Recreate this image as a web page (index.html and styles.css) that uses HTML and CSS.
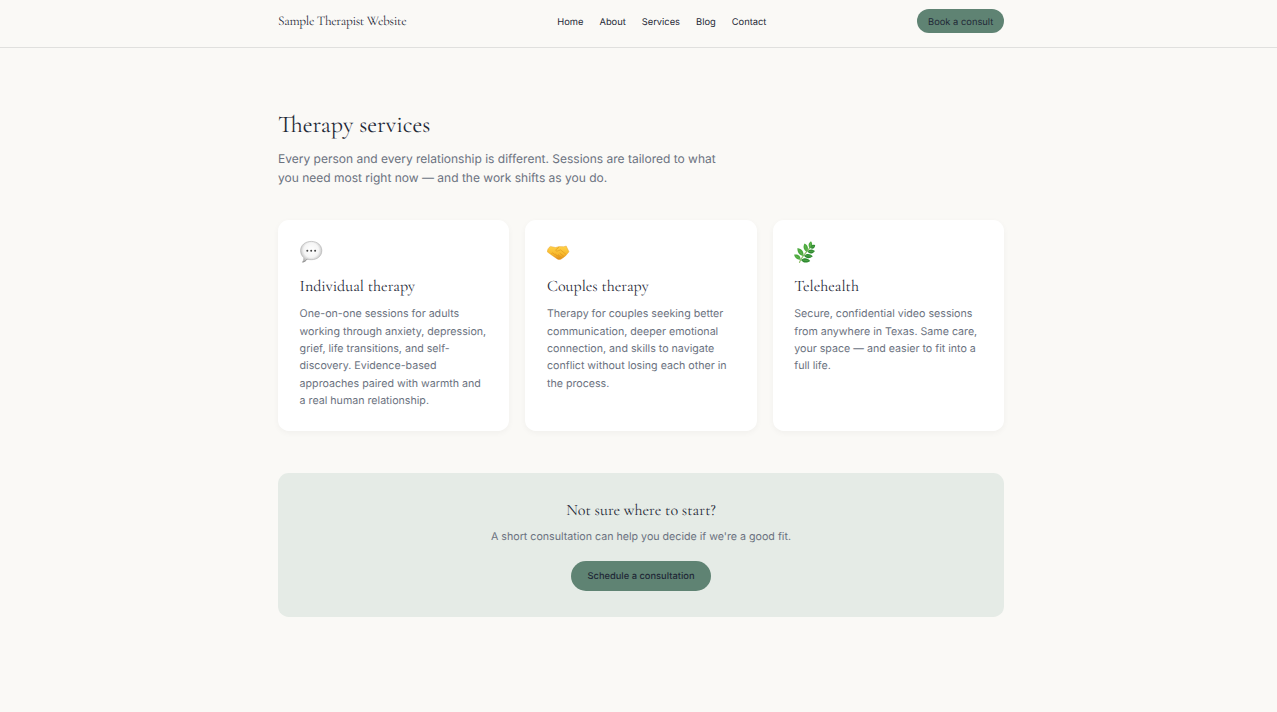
FILE: index.html
```html
<!DOCTYPE html>
<html lang="en">
<head>
    <meta charset="UTF-8">
    <meta name="viewport" content="width=device-width, initial-scale=1.0">
    <title>Services | Sample Therapist Website</title>
    <link rel="stylesheet" href="styles.css">
</head>
<body>
    <header class="site-header">
        <div class="container nav">
            <a href="#" class="brand">Sample Therapist Website</a>
            <nav class="nav-links">
                <a href="#">Home</a>
                <a href="#">About</a>
                <a href="#">Services</a>
                <a href="#">Blog</a>
                <a href="#">Contact</a>
            </nav>
            <a href="#" class="btn btn-small">Book a consult</a>
        </div>
    </header>

    <main class="container">
        <section class="intro">
            <h1>Therapy services</h1>
            <p>Every person and every relationship is different. Sessions are tailored to what you need most right now — and the work shifts as you do.</p>
        </section>

        <section class="cards">
            <article class="card">
                <!-- speech bubble -->
                <svg class="card-icon" viewBox="0 0 24 24">
                    <defs>
                        <radialGradient id="bubble" cx="50%" cy="42%" r="58%">
                            <stop offset="0" stop-color="#fff"/>
                            <stop offset="0.6" stop-color="#f5f5f5"/>
                            <stop offset="1" stop-color="#b4b4b4"/>
                        </radialGradient>
                    </defs>
                    <path d="M11.3 1.4C17.3 1.4 21.8 5.2 21.8 10.6S17.4 19.7 11.4 19.7C9.7 19.7 8.3 19.6 7 19.1C5.8 20.8 4.2 22.3 2.4 22.2C3.5 21 3.9 19.3 3.7 17.6C1.7 15.8 .6 13.4 .6 10.6C.6 5.2 5.2 1.4 11.3 1.4Z" fill="url(#bubble)" stroke="#acacac" stroke-width=".6"/>
                    <path d="M2.6 22C5 21.5 6 20.5 7 19.3" fill="none" stroke="#858585" stroke-width=".8"/>
                    <circle cx="7.3" cy="10.7" r="1" fill="#444"/>
                    <circle cx="11.2" cy="10.7" r="1" fill="#444"/>
                    <circle cx="15.1" cy="10.7" r="1" fill="#444"/>
                </svg>
                <h2>Individual therapy</h2>
                <p>One-on-one sessions for adults working through anxiety, depression, grief, life transitions, and self-discovery. Evidence-based approaches paired with warmth and a real human relationship.</p>
            </article>
            <article class="card">
                <!-- handshake -->
                <svg class="card-icon" viewBox="0 0 24 24">
                    <defs>
                        <linearGradient id="hands" x1="0" y1="0" x2="0" y2="1">
                            <stop offset="0" stop-color="#ffd248"/>
                            <stop offset="0.6" stop-color="#f8b92c"/>
                            <stop offset="1" stop-color="#df8b18"/>
                        </linearGradient>
                    </defs>
                    <path d="M3.4 6.4L8.6 7.5L12 6.6L16.8 6.7L19.2 6L22 11.8L19.5 14.7C18.2 16.5 16.4 17.7 14.2 19C12.8 19.8 11.4 19.8 10.2 18.9L3.8 14.5L.2 11.8C.2 9.8 1.4 7.6 3.4 6.4Z" fill="url(#hands)" stroke="#e39a22" stroke-width=".4"/>
                    <path d="M12 7.2L8.8 9.8C8.4 11 9.9 11.5 11.1 10.8L13.6 9.9L19.2 14.5M4.2 13.9L5.8 12.8L7.2 14.3L8.7 14L9.6 15.7L11.3 15.6L12.2 17.6L11.2 18.8M12.6 13L16.8 16.3M11 14.4L14.6 17.8" fill="none" stroke="#dc941f" stroke-width=".6"/>
                </svg>
                <h2>Couples therapy</h2>
                <p>Therapy for couples seeking better communication, deeper emotional connection, and skills to navigate conflict without losing each other in the process.</p>
            </article>
            <article class="card">
                <!-- herb sprig -->
                <svg class="card-icon" viewBox="0 0 24 24">
                    <path d="M5.4 22.8C6.4 18.4 11.6 13 16.5 6.8" fill="none" stroke="#8fbd68" stroke-width="1.1"/>
                    <g fill="#4aa83c">
                        <path d="M15.8 8.2C13.7 5.4 14.5 2.9 17 1.2C18.9 3.7 18.5 6.6 15.8 8.2Z"/>
                        <path d="M12.7 11.8C9.2 10 8.8 6.3 10.6 3.6C14 5.3 15 8.9 12.7 11.8Z"/>
                        <path d="M9.2 16C5.2 15.2 3 12 3.5 8C7.8 8.9 10.4 12 9.2 16Z"/>
                        <path d="M6.6 19.6C3.3 20.1 .8 18 .1 14.7C3.9 14 6.7 15.9 6.6 19.6Z"/>
                    </g>
                    <g fill="#2d8a2f">
                        <path d="M16.2 8C16.8 5 19 4.1 21.2 5.2C20.8 8.4 18.8 9.6 16.2 8Z"/>
                        <path d="M13.4 11.6C15 8.8 18.4 8.7 21 11C18.6 14.2 15.4 14.4 13.4 11.6Z"/>
                        <path d="M10 15.7C12.7 13 16.4 13.6 18.8 16.3C15.6 19 12.1 18.7 10 15.7Z"/>
                        <path d="M7 20C10 17.3 13.8 18 16.2 21C12.6 23.4 9.1 23 7 20Z"/>
                    </g>
                    <path d="M16.8 2.8L16 7.4M11.2 5.4L12.6 10.8M4.6 9.6L8.6 15M1.4 15.7L6 18.9M16.8 7.4L20.2 6.1M14.4 11.5L19.4 11.2M11.4 15.6L17.2 16.2M8.8 20L14.4 20.8" fill="none" stroke="#81c46a" stroke-width=".4"/>
                </svg>
                <h2>Telehealth</h2>
                <p>Secure, confidential video sessions from anywhere in Texas. Same care, your space — and easier to fit into a full life.</p>
            </article>
        </section>

        <section class="cta">
            <h2>Not sure where to start?</h2>
            <p>A short consultation can help you decide if we're a good fit.</p>
            <a href="#" class="btn">Schedule a consultation</a>
        </section>
    </main>
</body>
</html>
```
FILE: styles.css
```css
*{
    margin: 0;
    padding: 0;
    box-sizing: border-box;
}
body{
    min-height: 100vh;
    background: #faf9f6;
    color: #1f2937;
    font-family: Inter, sans-serif;
    text-rendering: geometricPrecision;
}
a{
    color: inherit;
    text-decoration: none;
}
h1, h2, .brand{
    font-family: "Cormorant Garamond", "Liberation Serif", serif;
    font-weight: 400;
}
.container{
    width: 726px;
    margin-left: 278px;
}

/* header */
.site-header{
    height: 48px;
    border-bottom: 1px solid #e0e0de;
}
.nav{
    display: flex;
    justify-content: space-between;
    align-items: center;
    height: 42px;
}
.brand{
    font-size: 13.33px;
    letter-spacing: -0.33px;
}
.nav-links{
    display: flex;
    gap: 16px;
    font-size: 9.33px;
    padding-top: 2px;
}
.btn{
    display: inline-block;
    height: 30px;
    padding: 0 16.5px;
    border-radius: 15px;
    background: #5f8373;
    font-size: 9.33px;
    font-weight: 500;
    line-height: 31px;
}
.btn-small{
    height: 24px;
    padding: 0 10.7px;
    font-weight: 400;
    line-height: 27px;
}

/* intro */
.intro{
    padding-top: 61px;
}
.intro h1{
    font-size: 24px;
    line-height: 32px;
}
.intro p{
    width: 450px;
    margin-top: 8px;
    color: #6b7280;
    font-size: 12px;
    line-height: 19.2px;
}

/* service cards */
.cards{
    display: grid;
    grid-template-columns: repeat(3, 1fr);
    gap: 16px;
    margin-top: 32.6px;
}
.card{
    height: 211px;
    padding: 20px 21.6px;
    border-radius: 10.67px;
    background: #fff;
    box-shadow: 0 2px 6px rgba(0, 0, 0, 0.04);
}
.card-icon{
    display: block;
    width: 24px;
    height: 24px;
}
.card h2{
    margin-top: 11px;
    font-size: 16px;
    line-height: 22px;
}
.card p{
    margin-top: 8.3px;
    color: #6b7280;
    font-size: 10.67px;
    line-height: 17.35px;
}

/* call to action */
.cta{
    height: 144px;
    margin-top: 42px;
    padding-top: 26px;
    border-radius: 10.67px;
    background: #e5ebe6;
    text-align: center;
}
.cta h2{
    font-size: 16px;
    line-height: 22px;
}
.cta p{
    margin: 7px 0 16px;
    color: #6b7280;
    font-size: 10.67px;
    line-height: 17px;
}
```
